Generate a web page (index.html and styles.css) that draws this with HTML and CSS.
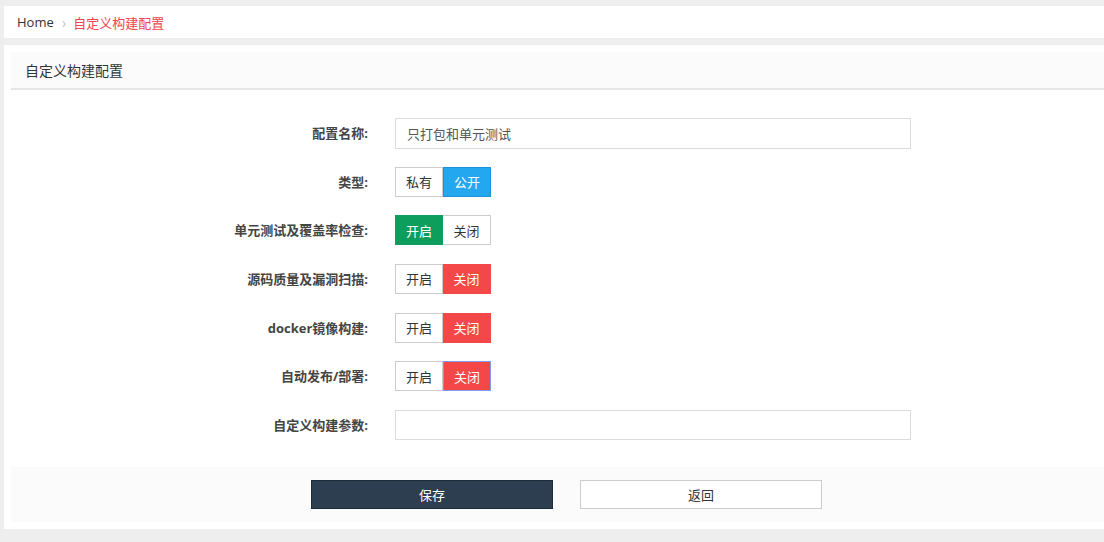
FILE: index.html
```html
<!DOCTYPE html>
<html lang="zh-CN">
<head>
<meta charset="utf-8">
<title>自定义构建配置</title>
<link rel="stylesheet" href="styles.css">
</head>
<body>
<div class="breadcrumb">
  <span class="crumb">Home</span>
  <span class="sep">›</span>
  <span class="crumb current">自定义构建配置</span>
</div>
<div class="panel">
  <div class="panel-head">自定义构建配置</div>
  <form class="form">
    <div class="row">
      <label class="label">配置名称:</label>
      <div class="input first">只打包和单元测试</div>
    </div>
    <div class="row">
      <label class="label">类型:</label>
      <div class="toggle">
        <span class="opt">私有</span>
        <span class="opt on-blue">公开</span>
      </div>
    </div>
    <div class="row">
      <label class="label">单元测试及覆盖率检查:</label>
      <div class="toggle">
        <span class="opt on-green">开启</span>
        <span class="opt">关闭</span>
      </div>
    </div>
    <div class="row">
      <label class="label">源码质量及漏洞扫描:</label>
      <div class="toggle">
        <span class="opt">开启</span>
        <span class="opt on-red">关闭</span>
      </div>
    </div>
    <div class="row">
      <label class="label">docker镜像构建:</label>
      <div class="toggle">
        <span class="opt">开启</span>
        <span class="opt on-red">关闭</span>
      </div>
    </div>
    <div class="row">
      <label class="label">自动发布/部署:</label>
      <div class="toggle">
        <span class="opt">开启</span>
        <span class="opt on-red focus">关闭</span>
      </div>
    </div>
    <div class="row">
      <label class="label">自定义构建参数:</label>
      <div class="input"></div>
    </div>
  </form>
  <div class="panel-foot">
    <button class="btn btn-save" type="button">保存</button>
    <button class="btn btn-back" type="button">返回</button>
  </div>
</div>
</body>
</html>
```

FILE: styles.css
```css
* { box-sizing: border-box; }
html, body { margin: 0; padding: 0; }
body {
  background: #eeeeee;
  font-family: "Open Sans", "Noto Sans CJK SC", sans-serif;
  font-size: 13px;
  color: #333;
  padding: 6px 0 0 4px;
  height: 542px;
  overflow: hidden;
}
.breadcrumb {
  background: #fff;
  height: 32px;
  display: flex;
  align-items: center;
  padding-left: 13px;
}
.crumb { color: #333; font-size: 13px; }
.crumb.current { color: #f0454c; }
.sep { color: #c8c8c8; font-size: 15px; margin: 0 7px 0 8px; line-height: 1; }
.panel {
  margin-top: 7px;
  background: #fff;
  padding: 7px 0 7px 7px;
}
.panel-head {
  background: #fbfbfb;
  height: 38px;
  border-bottom: 2px solid #e5e5e5;
  padding-left: 14px;
  display: flex;
  align-items: center;
  font-size: 14px;
  color: #333;
}
.form {
  padding-top: 28px;
  padding-bottom: 27px;
  display: flex;
  flex-direction: column;
  gap: 18.67px;
  margin: 0;
}
.row {
  display: flex;
  align-items: flex-start;
  height: 30px;
}
.label {
  width: 357px;
  line-height: 30px;
  text-align: right;
  font-weight: bold;
  color: #444;
  font-size: 13px;
  margin-right: 27px;
}
.input {
  width: 516px;
  height: 30px;
  border: 1px solid #dcdcdc;
  padding: 0 11px;
  display: flex;
  align-items: center;
  color: #555;
}
.input.first { height: 31px; }
.toggle { display: flex; height: 30px; }
.opt {
  width: 48px;
  height: 30px;
  border: 1px solid #cccccc;
  display: flex;
  align-items: center;
  justify-content: center;
  color: #333;
  background: #fff;
}
.opt + .opt { border-left: none; }
.opt.on-blue { background: #23a7ef; border: 1px solid #1993d8; color: #fff; }
.opt.on-green { background: #0d9e5e; border-color: #0d9e5e; color: #fff; }
.opt.on-red { background: #f44848; border-color: #f44848; color: #fff; }
.opt.focus { border: 1px solid #7f9cf0; }
.panel-foot {
  background: #fbfbfb;
  height: 55px;
  padding: 13px 0 0 300px;
  display: flex;
  gap: 27px;
  align-items: flex-start;
}
.btn {
  width: 242px;
  height: 29px;
  font-family: "Open Sans", "Noto Sans CJK SC", sans-serif;
  font-size: 13px;
  padding: 0;
  cursor: pointer;
}
.btn-save { background: #2c3e50; border: 1px solid #1e2b38; color: #fff; }
.btn-back { background: #fff; border: 1px solid #cccccc; color: #333; }
```
